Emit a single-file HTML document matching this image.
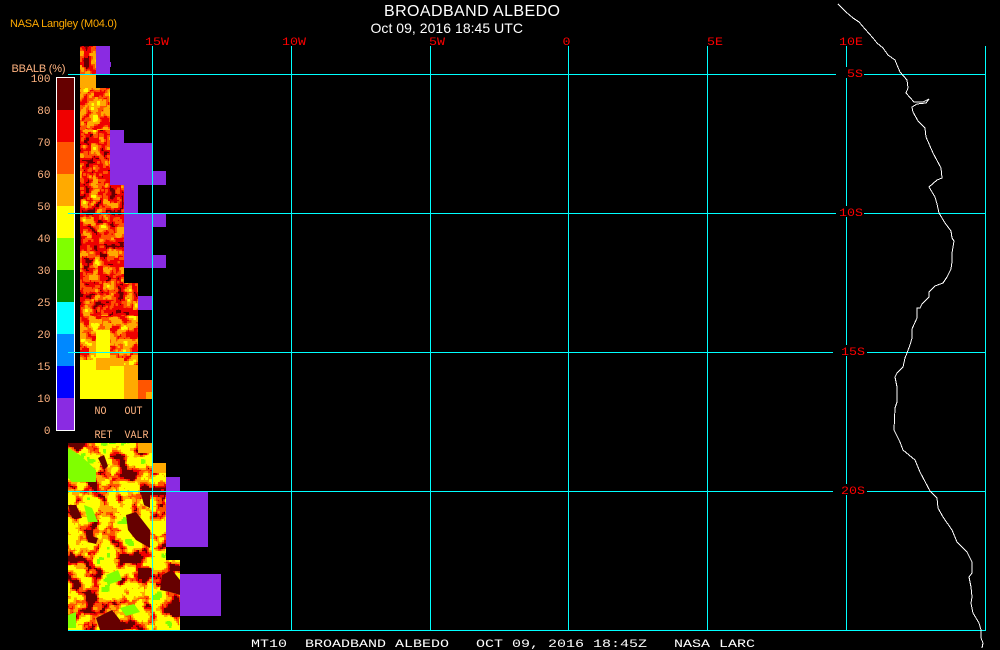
<!DOCTYPE html>
<html><head><meta charset="utf-8"><title>Broadband Albedo</title>
<style>
html,body{margin:0;padding:0;background:#000;width:1000px;height:650px;overflow:hidden}
svg{display:block}
text{font-family:"Liberation Sans",sans-serif}
.m{font-family:"Liberation Mono",monospace}
</style></head><body>
<svg width="1000" height="650" viewBox="0 0 1000 650" xmlns="http://www.w3.org/2000/svg">
<defs>
<filter id="A" filterUnits="userSpaceOnUse" x="0" y="0" width="1000" height="650" color-interpolation-filters="sRGB">
<feTurbulence type="fractalNoise" baseFrequency="0.12" numOctaves="4" seed="4" result="t"/>
<feColorMatrix in="t" values="1 0 0 0 0 1 0 0 0 0 1 0 0 0 0 0 0 0 0 1" result="n"/>
<feFlood x="0" y="0" width="1" height="1" flood-color="#fff"/><feComposite width="2" height="2"/><feTile result="g"/>
<feComposite in="n" in2="g" operator="in"/><feMorphology operator="dilate" radius="1"/>
<feComponentTransfer>
<feFuncR type="discrete" tableValues=".4 .4 .4 .4 .4 .4 .4 .4 .94 .94 .94 1 1 1 1 1 1 1 1 1"/>
<feFuncG type="discrete" tableValues="0 0 0 0 0 0 0 0 0 0 0 .33 .33 .67 .67 .67 1 1 1 1"/>
<feFuncB type="discrete" tableValues="0"/>
</feComponentTransfer>
</filter>
<filter id="B" filterUnits="userSpaceOnUse" x="0" y="0" width="1000" height="650" color-interpolation-filters="sRGB">
<feTurbulence type="fractalNoise" baseFrequency="0.1" numOctaves="4" seed="9" result="t"/>
<feColorMatrix in="t" values="1 0 0 0 0 1 0 0 0 0 1 0 0 0 0 0 0 0 0 1" result="n"/>
<feFlood x="0" y="0" width="1" height="1" flood-color="#fff"/><feComposite width="2" height="2"/><feTile result="g"/>
<feComposite in="n" in2="g" operator="in"/><feMorphology operator="dilate" radius="1"/>
<feComponentTransfer>
<feFuncR type="discrete" tableValues=".94 .94 .94 .94 .94 .94 .94 .94 .94 1 1 1 1 1 1 1 1 1 1 1"/>
<feFuncG type="discrete" tableValues="0 0 0 0 0 0 0 0 0 .33 .33 .67 .67 .67 1 1 1 1 1 1"/>
<feFuncB type="discrete" tableValues="0"/>
</feComponentTransfer>
</filter>
<filter id="C" filterUnits="userSpaceOnUse" x="0" y="0" width="1000" height="650" color-interpolation-filters="sRGB">
<feTurbulence type="fractalNoise" baseFrequency="0.06" numOctaves="5" seed="21" result="t"/>
<feColorMatrix in="t" values="1 0 0 0 0 1 0 0 0 0 1 0 0 0 0 0 0 0 0 1" result="n"/>
<feFlood x="0" y="0" width="1" height="1" flood-color="#fff"/><feComposite width="2" height="2"/><feTile result="g"/>
<feComposite in="n" in2="g" operator="in"/><feMorphology operator="dilate" radius="1"/>
<feComponentTransfer>
<feFuncR type="discrete" tableValues=".4 .4 .4 .4 .4 .4 .4 .4 .94 1 1 1 1 1 1 .5 .5 .5 .5 .5"/>
<feFuncG type="discrete" tableValues="0 0 0 0 0 0 0 0 0 .33 .67 1 1 1 1 1 1 1 1 1"/>
<feFuncB type="discrete" tableValues="0"/>
</feComponentTransfer>
</filter>
<clipPath id="ca">
<rect x="80" y="46" width="16" height="30"/>
<rect x="80" y="130" width="30" height="55"/>
<rect x="80" y="185" width="44" height="111"/>
<rect x="124" y="283" width="14" height="33"/>
<rect x="80" y="296" width="58" height="20"/>
</clipPath>
<clipPath id="cb">
<rect x="80" y="88" width="30" height="42"/>
<rect x="80" y="316" width="58" height="83"/>
</clipPath>
<clipPath id="cc">
<rect x="68" y="443" width="84" height="187"/>
<rect x="152" y="463" width="14" height="167"/>
<rect x="166" y="560" width="14" height="70"/>
</clipPath>
</defs>

<rect width="1000" height="650" fill="#000"/>

<!-- upper swath -->
<g fill="#ff5500">
<rect x="80" y="46" width="16" height="30"/>
<rect x="80" y="130" width="30" height="55"/>
<rect x="80" y="185" width="44" height="111"/>
<rect x="124" y="283" width="14" height="33"/>
<rect x="80" y="296" width="58" height="20"/>
</g>
<g fill="#ffaa00">
<rect x="80" y="88" width="30" height="42"/>
<rect x="80" y="316" width="58" height="83"/>
</g>
<g clip-path="url(#ca)"><rect width="1000" height="650" filter="url(#A)"/></g>
<g clip-path="url(#cb)"><rect width="1000" height="650" filter="url(#B)"/></g>
<rect x="80" y="75" width="16" height="13" fill="#ffaa00"/>
<rect x="96" y="330" width="14" height="28" fill="#ffff00"/>
<rect x="80" y="360" width="30" height="39" fill="#ffff00"/>
<rect x="96" y="358" width="28" height="12" fill="#ffaa00"/>
<rect x="124" y="365" width="14" height="34" fill="#ffaa00"/>
<rect x="110" y="366" width="14" height="33" fill="#ffff00"/>
<rect x="138" y="380" width="14" height="19" fill="#ff5500"/>
<rect x="146" y="392" width="6" height="7" fill="#ffaa00"/>

<!-- upper purple -->
<g fill="#8a2be2">
<rect x="96" y="46" width="14" height="28"/>
<rect x="110" y="62" width="1" height="5"/>
<rect x="110" y="130" width="14" height="55"/>
<rect x="124" y="143" width="14" height="125"/>
<rect x="138" y="143" width="14" height="42"/>
<rect x="138" y="213" width="14" height="55"/>
<rect x="138" y="296" width="14" height="14"/>
<rect x="152" y="171" width="14" height="14"/>
<rect x="152" y="213" width="14" height="14"/>
<rect x="152" y="255" width="14" height="13"/>
</g>

<!-- lower swath -->
<g fill="#ffff00">
<rect x="68" y="443" width="84" height="187"/>
<rect x="152" y="463" width="14" height="167"/>
<rect x="166" y="560" width="14" height="70"/>
</g>
<g clip-path="url(#cc)"><rect width="1000" height="650" filter="url(#C)"/></g>
<path d="M68 448L80 455L96 470L96 482L72 482L68 478Z" fill="#80ff00"/>
<rect x="138" y="443" width="14" height="10" fill="#ffaa00"/>
<rect x="152" y="463" width="14" height="10" fill="#ffaa00"/>
<g fill="#660000">
<path d="M162 575L172 570L180 580L180 595L170 592L160 590Z"/>
<path d="M98 458L104 455L108 466L104 470Z"/>
<path d="M126 515L136 512L150 530L150 548L136 540L128 530Z"/>
<path d="M140 490L150 492L150 508L144 505Z"/>
<path d="M96 618L112 610L120 620L122 630L100 630Z"/>
<path d="M68 505L76 505L82 518L72 518Z"/>
<path d="M86 535L98 538L96 544L88 542Z"/>
</g>
<g fill="#80ff00">
<path d="M84 505L92 508L98 522L88 522Z"/>
<path d="M106 575L118 570L122 580L110 584Z"/>
<path d="M120 608L134 604L140 612L126 616Z"/>
<path d="M68 615L76 612L76 628L68 628Z"/>
</g>
<g fill="#8a2be2">
<rect x="166" y="477" width="14" height="70"/>
<rect x="180" y="491" width="28" height="56"/>
<rect x="180" y="574" width="41" height="42"/>
</g>

<!-- colour bar -->
<rect x="57" y="78" width="17" height="32" fill="#660000"/>
<rect x="57" y="110" width="17" height="32" fill="#f00000"/>
<rect x="57" y="142" width="17" height="32" fill="#ff5500"/>
<rect x="57" y="174" width="17" height="32" fill="#ffaa00"/>
<rect x="57" y="206" width="17" height="32" fill="#ffff00"/>
<rect x="57" y="238" width="17" height="32" fill="#80ff00"/>
<rect x="57" y="270" width="17" height="32" fill="#008c00"/>
<rect x="57" y="302" width="17" height="32" fill="#00ffff"/>
<rect x="57" y="334" width="17" height="32" fill="#0088ff"/>
<rect x="57" y="366" width="17" height="32" fill="#0000ff"/>
<rect x="57" y="398" width="17" height="32" fill="#8a2be2"/>
<rect x="56.5" y="77.5" width="18" height="353" fill="none" stroke="#fff" stroke-width="1" shape-rendering="crispEdges"/>

<!-- grid -->
<g fill="#00ffff">
<rect x="152" y="46" width="1" height="585"/>
<rect x="291" y="46" width="1" height="585"/>
<rect x="430" y="46" width="1" height="585"/>
<rect x="568" y="46" width="1" height="585"/>
<rect x="707" y="46" width="1" height="585"/>
<rect x="985" y="46" width="1" height="585"/>
<rect x="846" y="46" width="1" height="21"/>
<rect x="846" y="78" width="1" height="128"/>
<rect x="846" y="217" width="1" height="128"/>
<rect x="846" y="356" width="1" height="128"/>
<rect x="846" y="495" width="1" height="136"/>
<rect x="68" y="74" width="768" height="1"/>
<rect x="864" y="74" width="122" height="1"/>
<rect x="68" y="213" width="768" height="1"/>
<rect x="864" y="213" width="122" height="1"/>
<rect x="68" y="352" width="765" height="1"/>
<rect x="867" y="352" width="119" height="1"/>
<rect x="68" y="491" width="765" height="1"/>
<rect x="867" y="491" width="119" height="1"/>
<rect x="68" y="630" width="918" height="1"/>
</g>

<!-- coastline -->
<polyline fill="none" stroke="#fff" stroke-width="1" shape-rendering="crispEdges" points="838,4 846,12 853,18 859,22 865,29 873,38 877,43 883,48 888,55 895,60 897,65 900,72 907,80 908,88 906,93 914,102 923,102 929,99 926,103 917,104 912,107 913,112 918,121 925,128 926,137 933,153 941,168 942,178 937,180 929,187 935,197 937,204 939,213 945,223 951,231 952,238 954,241 952,253 952,262 951,269 947,277 943,283 935,286 929,292 929,297 922,304 920,308 917,308 917,318 912,329 912,338 910,345 907,353 905,358 903,367 897,373 895,377 897,387 897,402 895,408 894,430 900,442 903,450 915,460 920,472 930,491 937,498 938,508 943,517 952,530 957,542 967,552 972,562 972,573 969,577 971,587 972,597 971,603 973,613 979,623 981,630 981,638 983,643 982,648"/>

<!-- titles -->
<text x="384" y="16" font-size="16" fill="#fff" textLength="176" lengthAdjust="spacing">BROADBAND ALBEDO</text>
<text x="370.5" y="33" font-size="14" fill="#fff" textLength="152.5" lengthAdjust="spacing">Oct 09, 2016 18:45 UTC</text>
<text x="10" y="27" font-size="11" fill="#ffaa00" textLength="107" lengthAdjust="spacing">NASA Langley (M04.0)</text>
<text x="11.5" y="72" font-size="11" fill="#ffb380" textLength="54" lengthAdjust="spacing">BBALB (%)</text>

<!-- legend labels -->
<g font-size="11" fill="#ffb380" text-anchor="end">
<text class="m" x="50.5" y="82">100</text>
<text class="m" x="50.5" y="114">80</text>
<text class="m" x="50.5" y="146">70</text>
<text class="m" x="50.5" y="178">60</text>
<text class="m" x="50.5" y="210">50</text>
<text class="m" x="50.5" y="242">40</text>
<text class="m" x="50.5" y="274">30</text>
<text class="m" x="50.5" y="306">25</text>
<text class="m" x="50.5" y="338">20</text>
<text class="m" x="50.5" y="370">15</text>
<text class="m" x="50.5" y="402">10</text>
<text class="m" x="50.5" y="434">0</text>
</g>
<g font-size="11" fill="#ffb380">
<text class="m" x="94.5" y="414" textLength="12" lengthAdjust="spacingAndGlyphs">NO</text>
<text class="m" x="124.5" y="414" textLength="18" lengthAdjust="spacingAndGlyphs">OUT</text>
<text class="m" x="94.5" y="438" textLength="18" lengthAdjust="spacingAndGlyphs">RET</text>
<text class="m" x="124.5" y="438" textLength="24" lengthAdjust="spacingAndGlyphs">VALR</text>
</g>

<!-- red axis labels -->
<g font-size="11" fill="#ff0000">
<text class="m" x="145" y="45" textLength="24" lengthAdjust="spacingAndGlyphs">15W</text>
<text class="m" x="282" y="45" textLength="24" lengthAdjust="spacingAndGlyphs">10W</text>
<text class="m" x="429" y="45" textLength="16" lengthAdjust="spacingAndGlyphs">5W</text>
<text class="m" x="562.5" y="45" textLength="8" lengthAdjust="spacingAndGlyphs">0</text>
<text class="m" x="707" y="45" textLength="16" lengthAdjust="spacingAndGlyphs">5E</text>
<text class="m" x="839" y="45" textLength="24" lengthAdjust="spacingAndGlyphs">10E</text>
<text class="m" x="847" y="77" textLength="16" lengthAdjust="spacingAndGlyphs">5S</text>
<text class="m" x="839" y="216" textLength="24" lengthAdjust="spacingAndGlyphs">10S</text>
<text class="m" x="841" y="355" textLength="24" lengthAdjust="spacingAndGlyphs">15S</text>
<text class="m" x="841" y="494" textLength="24" lengthAdjust="spacingAndGlyphs">20S</text>
</g>

<!-- footer -->
<g font-size="11" fill="#fff">
<text class="m" x="251" y="647" textLength="36" lengthAdjust="spacingAndGlyphs">MT10</text>
<text class="m" x="305" y="647" textLength="144" lengthAdjust="spacingAndGlyphs">BROADBAND ALBEDO</text>
<text class="m" x="476" y="647" textLength="171" lengthAdjust="spacingAndGlyphs">OCT 09, 2016 18:45Z</text>
<text class="m" x="674" y="647" textLength="81" lengthAdjust="spacingAndGlyphs">NASA LARC</text>
</g>
</svg>
</body></html>
